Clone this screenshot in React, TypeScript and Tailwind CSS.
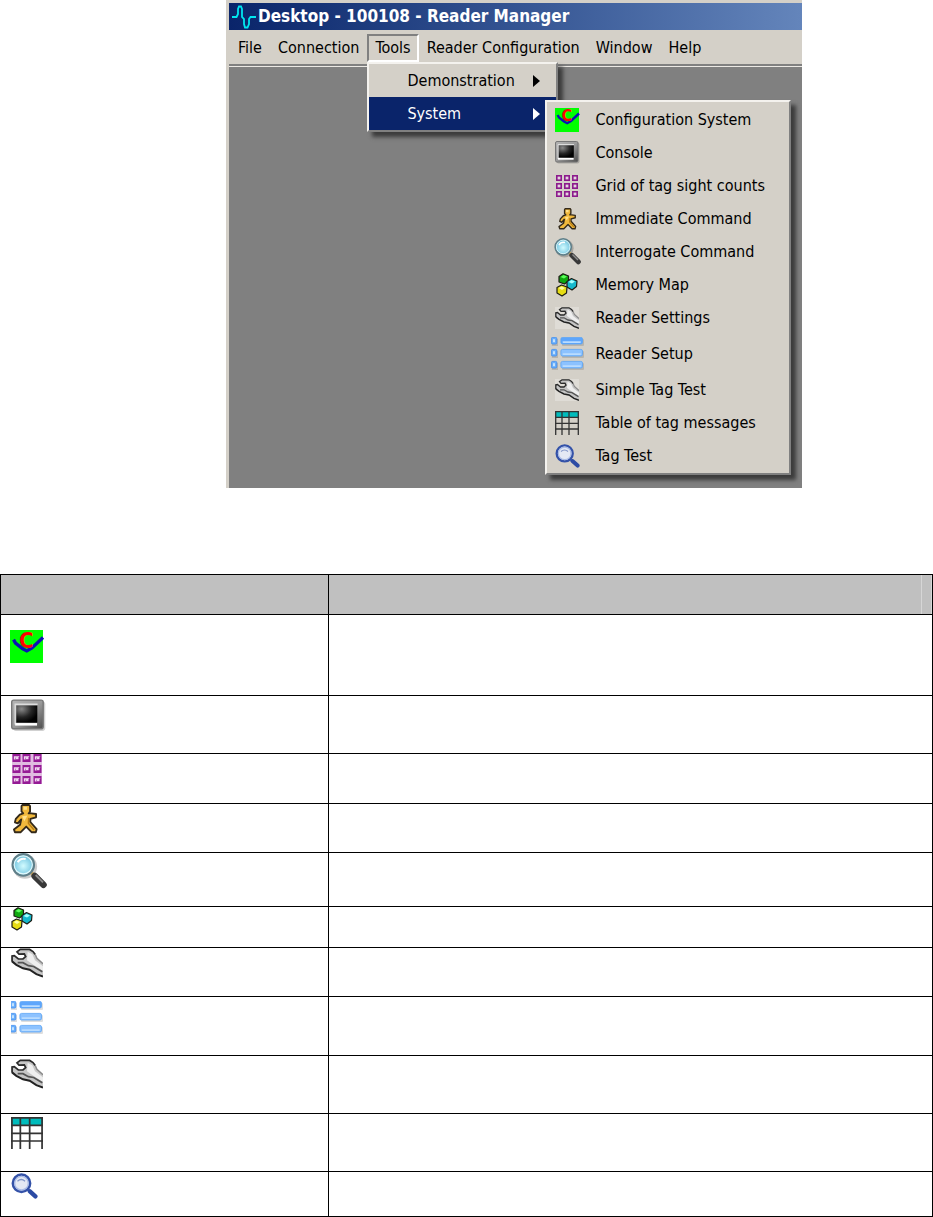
import type { ReactNode } from "react";
import clsx from "clsx";

type IconProps = { className?: string };

function ConfigIcon({ className }: IconProps) {
  return (
    <svg viewBox="0 0 24 24" className={clsx("overflow-visible", className)} aria-hidden="true">
      <rect width="24" height="24" fill="#00ff00" />
      <path d="M2.6 7 L4 9.5 L9 13.5 L12.2 15.2 L16 13 L24 5.5" fill="none" stroke="#0a12b4" strokeWidth="2.4" />
      <text
        x="11.8"
        y="13"
        textAnchor="middle"
        fontFamily="DejaVu Sans Condensed, sans-serif"
        fontWeight="bold"
        fontSize="16"
        fill="#ff0000"
      >
        C
      </text>
    </svg>
  );
}

function ConsoleIcon({ className }: IconProps) {
  return (
    <svg viewBox="0 0 25 23" className={className} aria-hidden="true">
      <defs>
        <linearGradient id="console-frame" x1="0" y1="0" x2="1" y2="1">
          <stop offset="0" stopColor="#b4b4b4" />
          <stop offset="0.5" stopColor="#9a9a9a" />
          <stop offset="1" stopColor="#4c4c4c" />
        </linearGradient>
        <radialGradient id="console-screen" cx="0.25" cy="0.2" r="0.8">
          <stop offset="0" stopColor="#8a8a8a" />
          <stop offset="0.6" stopColor="#262626" />
          <stop offset="1" stopColor="#000000" />
        </radialGradient>
      </defs>
      <rect x="1.5" y="1.5" width="23" height="21" rx="2" fill="#000" opacity="0.18" />
      <rect x="0.5" y="0.5" width="22.5" height="20.5" rx="1.5" fill="url(#console-frame)" stroke="#777" />
      <path d="M3 18 V3.5 H19" fill="none" stroke="#ddd" />
      <path d="M3 17.8 H18.6" stroke="#fff" strokeWidth="1.8" />
      <rect x="3.8" y="4.4" width="15" height="12.2" fill="url(#console-screen)" />
    </svg>
  );
}

const gridSteps = [0, 8, 16];

function GridIcon({ className }: IconProps) {
  return (
    <svg viewBox="0 0 22 22" className={className} aria-hidden="true">
      {gridSteps.map((y) =>
        gridSteps.map((x) => (
          <rect
            key={`${x}-${y}`}
            x={x + 0.8}
            y={y + 0.8}
            width="4.4"
            height="4.4"
            fill="#e3d3df"
            stroke="#8c1a8c"
            strokeWidth="1.6"
          />
        ))
      )}
    </svg>
  );
}

function GridLargeIcon({ className }: IconProps) {
  return (
    <svg viewBox="0 0 30 30" className={className} aria-hidden="true">
      <rect width="30" height="30" fill="#e0bce0" />
      {[0, 11, 22].map((y) =>
        [0, 10, 21].map((x) => (
          <g key={`${x}-${y}`}>
            <rect x={x + 0.5} y={y} width="8" height="8" fill="#951a95" />
            <path d={`M${x + 2.5} ${y + 5.5} V${y + 3} H${x + 6} L${x + 4.5} ${y + 4.5} H${x + 6.5}`} fill="none" stroke="#f0d8f0" strokeWidth="1.3" />
          </g>
        ))
      )}
    </svg>
  );
}

function RunnerIcon({ className }: IconProps) {
  return (
    <svg viewBox="0 0 18 21" className={className} aria-hidden="true">
      <path
        d="M6.8 .7 H11.6 L12.2 1.5 V5.2 L11.2 6.6 H13 L16.4 7 V9.3 L12.4 10.4 V12.6 L16.8 17.6 L16.2 19.8 H13.4 L9.5 15.8 L5.5 19.8 H1.6 L.9 17.8 L5.2 14.6 L6 10.8 L3.6 13.6 L1.6 12.8 L2.2 10.4 L5 7.4 L7.4 6.6 L6.2 5.2 V1.5 Z"
        fill="#f0b83c"
        stroke="#33291a"
        strokeWidth="1.3"
        strokeLinejoin="round"
      />
      <path d="M7.6 2 H10 V4 H7.6 Z M6.6 8.6 L10.4 8 L8.2 12" fill="#ffe08a" />
      <path d="M11.2 9.6 L11 13.4 L15 18.2" fill="none" stroke="#b87d14" />
    </svg>
  );
}

function LensIcon({ className }: IconProps) {
  return (
    <svg viewBox="0 0 27 27" className={className} aria-hidden="true">
      <defs>
        <radialGradient id="lens-glass" cx="0.5" cy="0.55" r="0.6">
          <stop offset="0" stopColor="#d2fbff" />
          <stop offset="0.6" stopColor="#8bd3e8" />
          <stop offset="1" stopColor="#5ba5bd" />
        </radialGradient>
      </defs>
      <path d="M17 19 L24 26 L27 24 L20 16 Z" fill="#000" opacity="0.25" />
      <circle cx="10.4" cy="10.2" r="9.2" fill="#000" opacity="0.2" />
      <path d="M14.5 14 L18 17.5" stroke="#c9a45c" strokeWidth="2.6" />
      <path d="M17.8 17.3 L24.3 23.8" stroke="#383838" strokeWidth="5" strokeLinecap="round" />
      <path d="M18.5 16.5 L24 22" stroke="#8d8d8d" strokeWidth="1.4" />
      <circle cx="9.2" cy="8.9" r="8" fill="url(#lens-glass)" stroke="#5f7f89" strokeWidth="1.7" />
      <circle cx="9.2" cy="8.9" r="6.8" fill="none" stroke="#dff8fc" strokeWidth="0.9" />
      <path d="M5 7 Q7 3.5 11 4.5" fill="none" stroke="#fff" strokeWidth="1.6" />
    </svg>
  );
}

function CubesIcon({ className }: IconProps) {
  return (
    <svg viewBox="0 0 22 24" className={className} aria-hidden="true">
      <g stroke="#1c1c14" strokeWidth="1.2" strokeLinejoin="round">
        <path d="M3 3.5 L7 .8 L12.5 3 V8 L8.5 11 L3 9 Z" fill="#10a810" />
        <path d="M11 8.5 L15.5 5.5 L21 8 L20.5 13.5 L16 17 L11 14 Z" fill="#16b8cc" />
        <path d="M1 14.5 L5.5 12 L11 14 L10.5 20 L6 23 L1 20 Z" fill="#e6dc14" />
      </g>
      <path d="M4.5 4 L7.5 2 L11 3.5 L8 5.5 Z" fill="#5cff5c" />
      <path d="M12.5 9 L15.5 7 L19 8.5 L16 10.5 Z" fill="#a4ffff" />
      <path d="M2.5 15 L5.5 13.5 L9 15 L6 17 Z" fill="#ffffa0" />
    </svg>
  );
}

function WrenchIcon({ className }: IconProps) {
  return (
    <svg viewBox="0 0 24 22" className={className} aria-hidden="true">
      <rect width="24" height="22" fill="#fff" opacity="0.25" />
      <path
        d="M4.5 2 L7 .6 H14 L17 2.5 L19.5 7 L24 11.5 V21.5 L20 20 L15 17 L9 15.5 L3.5 12.5 L.6 10 V6 L2.5 5.5 L5.5 7.8 H9 L11 6 L9.5 4 L6 4.2 Z"
        fill="#c6c6c6"
      />
      <path d="M12.5 2.5 L16 4.5 L18 9 L24 13.5 V17 L17 12.5 L12 9 Z" fill="#eee" />
      <path
        d="M.8 10 V5.8 L2.5 5.5 L5.5 8 H9 L11 6.2 L10 4.2 L6 4.4 L4.5 2.6 L7 .8 H14 L16.5 2.4 L18.2 4.6"
        fill="none"
        stroke="#2a2a2a"
        strokeWidth="1.3"
      />
      <path d="M18.2 4.6 L19.4 7.4 L24 11.6" fill="none" stroke="#888" strokeWidth="1.1" />
      <path d="M.8 9.8 L4 12.4 L9 15 L14 16 L19 19.4 L24 21.2" fill="none" stroke="#222" strokeWidth="1.5" />
      <path d="M5 10.8 H9 L13 13 L17 13.6 L23.5 17.6" fill="none" stroke="#555" strokeWidth="1.3" />
    </svg>
  );
}

function ListRows() {
  return (
    <>
      {[0, 12, 24].map((y) => (
        <g key={y}>
          <rect x="0.8" y={y + 2} width="6.2" height="7" fill="#000" opacity="0.13" />
          <rect x="11" y={y + 2} width="22" height="7" rx="1" fill="#000" opacity="0.13" />
          <rect x="0.4" y={y + 0.4} width="5.4" height="6.6" rx="1.2" fill="#69aefb" stroke="#3f8df0" strokeWidth="0.8" />
          <rect x="2" y={y + 2.2} width="2" height="3" fill="#c3e2ff" />
          <rect
            x="9.9"
            y={y + 0.4}
            width="21.6"
            height="6.6"
            rx="1.6"
            fill={y === 0 ? "#5ea6fc" : "#8cc2ff"}
            stroke="#5ca4f5"
            strokeWidth="0.8"
          />
          <rect x="11.5" y={y + 4.2} width="18.5" height="1.7" rx="0.8" fill="#b9dcff" />
        </g>
      ))}
    </>
  );
}

function ListIcon({ className }: IconProps) {
  return (
    <svg viewBox="0 0 33 33" className={className} aria-hidden="true">
      <ListRows />
    </svg>
  );
}

// same rows, with the left edge of the bullets cut off
function ListCroppedIcon({ className }: IconProps) {
  return (
    <svg viewBox="1 0 33 33" className={className} aria-hidden="true">
      <ListRows />
    </svg>
  );
}

function TableIcon({ className }: IconProps) {
  return (
    <svg viewBox="0 0 24 24" className={className} aria-hidden="true">
      <rect width="24" height="6.5" fill="#00bcbc" />
      <path
        d="M0 .6 H24 M0 6.3 H24 M0 12.3 H24 M0 18 H24 M.7 0 V24 M7 0 V24 M14 0 V24 M23.3 0 V24"
        fill="none"
        stroke="#333"
        strokeWidth="1.3"
      />
    </svg>
  );
}

function SearchBlueIcon({ className }: IconProps) {
  return (
    <svg viewBox="0 0 25 24" className={className} aria-hidden="true">
      <path d="M14.5 14.5 L17.5 17" stroke="#5d7cc8" strokeWidth="2.4" />
      <path d="M17.5 17 L22.6 21.6" stroke="#2c4ba4" strokeWidth="4" strokeLinecap="round" />
      <circle cx="9.7" cy="9.4" r="8" fill="#e4e9f4" stroke="#3452a8" strokeWidth="2.4" />
      <circle cx="9.7" cy="9.4" r="6.3" fill="none" stroke="#a9bbe6" strokeWidth="1.2" />
      <path d="M6 7.5 Q9.5 4.5 13 7.5" fill="none" stroke="#8296c8" strokeWidth="1.2" />
    </svg>
  );
}

function PulseIcon({ className }: IconProps) {
  return (
    <svg viewBox="0 0 24 24" className={className} aria-hidden="true">
      <path
        d="M0 12 H4.5 L6 9 V4 L7 1.5 H9 L10 4 V12 L12 14 V19 L13 22.5 H15.5 L17 19 V14 L18.5 12 H24"
        fill="none"
        stroke="#00e6f0"
        strokeWidth="1.8"
      />
    </svg>
  );
}

const systemItems: { label: string; icon: ReactNode; tall?: boolean }[] = [
  { label: "Configuration System", icon: <ConfigIcon className="size-6" /> },
  { label: "Console", icon: <ConsoleIcon className="h-[23px] w-[25px]" /> },
  { label: "Grid of tag sight counts", icon: <GridIcon className="size-[22px]" /> },
  { label: "Immediate Command", icon: <RunnerIcon className="h-[22px] w-[19px]" /> },
  { label: "Interrogate Command", icon: <LensIcon className="size-[27px]" /> },
  { label: "Memory Map", icon: <CubesIcon className="h-6 w-[22px]" /> },
  { label: "Reader Settings", icon: <WrenchIcon className="h-[22px] w-6" /> },
  { label: "Reader Setup", icon: <ListIcon className="size-[33px]" />, tall: true },
  { label: "Simple Tag Test", icon: <WrenchIcon className="h-[22px] w-6" /> },
  { label: "Table of tag messages", icon: <TableIcon className="size-6" /> },
  { label: "Tag Test", icon: <SearchBlueIcon className="h-6 w-[25px]" /> },
];

const iconRows: { height: string; pad: string; icon: ReactNode }[] = [
  { height: "h-[81px]", pad: "pt-[15px]", icon: <ConfigIcon className="size-[33px]" /> },
  { height: "h-[58px]", pad: "pt-[3px]", icon: <ConsoleIcon className="ml-px h-[33px] w-[35px]" /> },
  { height: "h-[50px]", pad: "pt-0", icon: <GridLargeIcon className="ml-0.5 size-[30px]" /> },
  { height: "h-[49px]", pad: "pt-0", icon: <RunnerIcon className="ml-0.5 h-[30px] w-[27px]" /> },
  { height: "h-[54px]", pad: "pt-0", icon: <LensIcon className="ml-px size-[36px]" /> },
  { height: "h-[41px]", pad: "pt-0", icon: <CubesIcon className="ml-px h-6 w-[22px]" /> },
  { height: "h-[49px]", pad: "pt-0", icon: <WrenchIcon className="ml-px h-[30px] w-[32px]" /> },
  { height: "h-[59px]", pad: "pt-1", icon: <ListCroppedIcon className="ml-px size-[33px]" /> },
  { height: "h-[58px]", pad: "pt-[3px]", icon: <WrenchIcon className="ml-px h-[30px] w-[32px]" /> },
  { height: "h-[58px]", pad: "pt-[3px]", icon: <TableIcon className="ml-px size-8" /> },
  { height: "h-[45px]", pad: "pt-px", icon: <SearchBlueIcon className="ml-px h-[26px] w-[27px]" /> },
];

const panel =
  "absolute z-10 border-2 border-t-[#f4f2ee] border-l-[#f4f2ee] border-r-[#808080] border-b-[#808080] bg-[#d4d0c8] shadow-[5px_5px_4px_#3c3c3c]";

function MenuButton({ children }: { children: ReactNode }) {
  return (
    <button type="button" className="h-7 px-2 whitespace-nowrap">
      {children}
    </button>
  );
}

function Arrow() {
  return (
    <svg viewBox="0 0 7 12" className="h-3 w-[7px]" aria-hidden="true">
      <path d="M0 0 L7 6 L0 12 Z" fill="currentColor" />
    </svg>
  );
}

function SystemMenu() {
  return (
    <div className={clsx(panel, "top-[3px] left-[176px] w-[246px] py-px")}>
      {systemItems.map((item) => (
        <button
          key={item.label}
          type="button"
          className={clsx("flex w-full items-center whitespace-nowrap", item.tall ? "h-[39px]" : "h-[33px]")}
        >
          <span className="flex w-10 justify-center">{item.icon}</span>
          <span className="pl-2">{item.label}</span>
        </button>
      ))}
    </div>
  );
}

function ToolsMenu() {
  return (
    <div className={clsx(panel, "top-full left-0 w-[191px]")}>
      <button type="button" className="flex h-[33px] w-full items-center justify-between pr-4 pl-[38px]">
        Demonstration
        <Arrow />
      </button>
      <div className="relative">
        <button
          type="button"
          className="flex h-[33px] w-full items-center justify-between bg-[#0a246a] pr-4 pl-[38px] text-white"
        >
          System
          <Arrow />
        </button>
        <SystemMenu />
      </div>
    </div>
  );
}

export default function App() {
  return (
    <main className="bg-white text-black">
      <section className="ml-[226px] max-w-xl bg-[#d4d0c8] pt-[3px] pl-[3px] font-['DejaVu_Sans_Condensed','DejaVu_Sans',sans-serif] text-base">
        <header className="flex h-[27px] items-center bg-linear-to-r from-[#0a246a] to-[#6485bb] pl-[3px] text-white">
          <PulseIcon className="size-6" />
          <h1 className="pl-0.5 text-[17px] font-bold whitespace-nowrap">Desktop - 100108 - Reader Manager</h1>
        </header>

        <nav className="flex h-[34px] items-center pt-0.5 pl-px">
          <MenuButton>File</MenuButton>
          <MenuButton>Connection</MenuButton>
          <div className="relative">
            <button
              type="button"
              className="h-7 border-2 border-t-[#808080] border-l-[#808080] border-r-white border-b-white px-1.5 leading-5"
            >
              Tools
            </button>
            <ToolsMenu />
          </div>
          <MenuButton>Reader Configuration</MenuButton>
          <MenuButton>Window</MenuButton>
          <MenuButton>Help</MenuButton>
        </nav>

        <div className="h-[424px] border-t-2 border-[#808080] bg-[#808080]">
          <div className="h-px bg-[#ece9e4]" />
        </div>
      </section>

      <table className="mt-[86px] w-full table-fixed border-separate border-spacing-0 border-t border-l border-black">
        <thead>
          <tr className="h-10 bg-[#c0c0c0]">
            <th className="w-[35.2%] border-r border-b border-black p-0" />
            <th className="border-r border-b border-black p-0">
              <div className="ml-auto h-[39px] w-[11px] border-x border-[#d6d6d6]" />
            </th>
          </tr>
        </thead>
        <tbody>
          {iconRows.map((row, i) => (
            <tr key={i} className={row.height}>
              <td className={clsx("border-r border-b border-black pr-0 pb-0 pl-[9px] align-top", row.pad)}>
                {row.icon}
              </td>
              <td className="border-r border-b border-black p-0" />
            </tr>
          ))}
        </tbody>
      </table>
    </main>
  );
}
